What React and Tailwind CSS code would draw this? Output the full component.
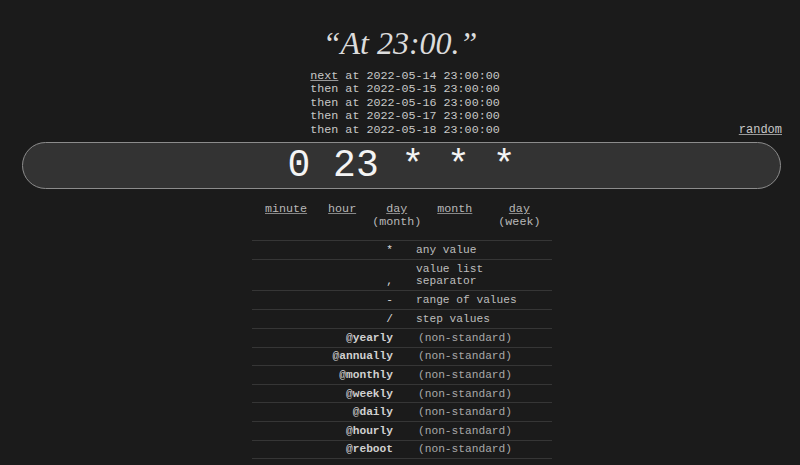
import React from 'react';

const mono = { fontFamily: '"Liberation Mono", "Courier New", monospace' };

const nextRuns = [
  ['next', '2022-05-14 23:00:00'],
  ['then', '2022-05-15 23:00:00'],
  ['then', '2022-05-16 23:00:00'],
  ['then', '2022-05-17 23:00:00'],
  ['then', '2022-05-18 23:00:00'],
];

const symbols = [
  ['*', 'any value'],
  [',', 'value list separator'],
  ['-', 'range of values'],
  ['/', 'step values'],
];

const specials = ['yearly', 'annually', 'monthly', 'weekly', 'daily', 'hourly', 'reboot'];

const App = () => {
  return (
    <div className="min-h-[465px] w-[800px] bg-[#1b1b1b] text-[#cfcfcf] overflow-hidden" style={mono}>
      <h1
        className="pt-[25px] text-center text-[32px] leading-[36px] italic text-[#dcdcdc]"
        style={{ fontFamily: '"Liberation Serif", Georgia, serif' }}
      >
        “At 23:00.”
      </h1>

      <div className="mt-[9px] grid grid-cols-[1fr_auto_1fr] items-end">
        <div />
        <div className="pl-[10px] text-[11.7px] leading-[13.4px] text-[#c8c8c8]">
          {nextRuns.map(([word, date], i) => (
            <div key={i} className="whitespace-pre">
              {i === 0 ? <span className="underline decoration-[#999]">next</span> : word} at {date}
            </div>
          ))}
        </div>
        <div className="flex justify-end pr-[18px]">
          <span className="text-[12px] leading-[13.4px] underline decoration-[#999] text-[#c8c8c8]">random</span>
        </div>
      </div>

      <div className="ml-[22px] mr-[19px] mt-[5px] h-[47px] rounded-full border border-[#8c8c8c] bg-[#333333] flex items-center justify-center">
        <span className="text-[38px] leading-none text-[#f4f4f4] whitespace-pre">0 23 * * *</span>
      </div>

      <div className="mt-[14px] ml-[265px] flex text-[11.7px] leading-[13px] text-[#b8b8b8]">
        <div className="text-center underline decoration-[#888]">minute</div>
        <div className="ml-[21px] text-center underline decoration-[#888]">hour</div>
        <div className="ml-[16px] text-center">
          <div className="underline decoration-[#888]">day</div>
          <div>(month)</div>
        </div>
        <div className="ml-[16px] text-center underline decoration-[#888]">month</div>
        <div className="ml-[26px] text-center">
          <div className="underline decoration-[#888]">day</div>
          <div>(week)</div>
        </div>
      </div>

      <div className="ml-[252px] mt-[11px] w-[300px] border-t border-[#363636] text-[11.2px] leading-[12px]">
        {symbols.map(([sym, desc]) => (
          <div key={sym} className="flex items-center border-b border-[#363636] py-[3px]">
            <div className="w-[141px] text-right text-[#d8d8d8] self-end">{sym}</div>
            <div className={`pl-[23px] text-[#bdbdbd] ${desc.length > 16 ? 'w-[120px]' : ''}`}>{desc}</div>
          </div>
        ))}
        {specials.map((s) => (
          <div key={s} className="flex items-center border-b border-[#363636] h-[18.6px]">
            <div className="w-[141px] text-right font-bold text-[#d0d0d0]">
              <span className="font-normal">@</span>{s}
            </div>
            <div className="pl-[25px] text-[#a8a8a8]">(non-standard)</div>
          </div>
        ))}
      </div>
    </div>
  );
};

export default App;
